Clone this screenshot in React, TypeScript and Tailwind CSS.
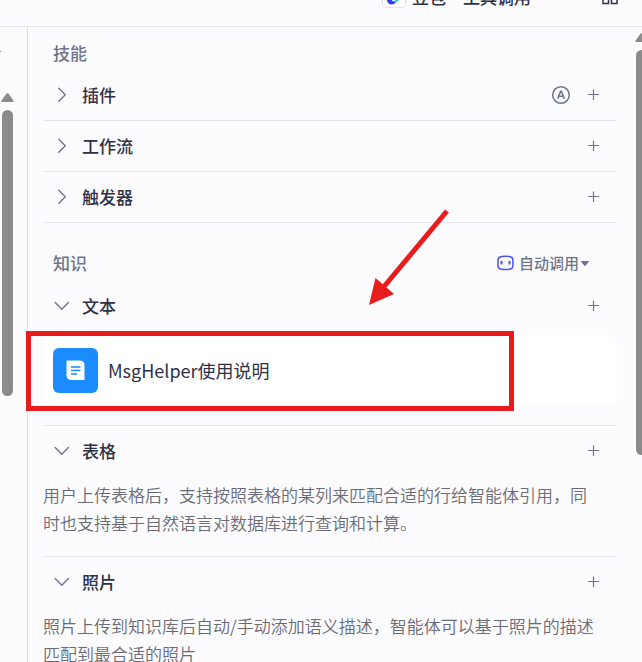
import { useState } from "react";
import type { ReactNode } from "react";

interface SectionProps {
  title: string;
  defaultOpen?: boolean;
  extra?: ReactNode;
  last?: boolean;
  children?: ReactNode;
}

function Chevron({ open }: { open: boolean }) {
  return (
    <svg className="h-4 w-4" viewBox="0 0 16 16" fill="none" stroke="#6f7489" strokeWidth="1.4" strokeLinecap="round" strokeLinejoin="round">
      {open ? <path d="M1.200 4.500 7.800 11.200 14.400 4.500" /> : <path d="M4.800 1.200 11.300 7.700 4.800 14.200" />}
    </svg>
  );
}

function Section({ title, defaultOpen = false, extra, last, children }: SectionProps) {
  const [open, setOpen] = useState(defaultOpen);

  return (
    <section className={last ? "" : "border-b border-[#e4e4f0]"}>
      <div className="flex h-[50px] items-center justify-between pr-[18px] pl-[11px]">
        <button
          type="button"
          aria-expanded={open}
          onClick={() => setOpen(!open)}
          className="flex items-center gap-3 text-[17px] leading-7 font-medium text-[#2e3145]"
        >
          <Chevron open={open} />
          {title}
        </button>
        <div className="flex items-center gap-4">
          {extra}
          <button type="button" aria-label={`添加${title}`}>
            <svg className="h-3 w-3" viewBox="0 0 12 12" fill="none" stroke="#6f7489" strokeWidth="1.2">
              <path d="M6.500 .5v10.500M1 5.500h11" />
            </svg>
          </button>
        </div>
      </div>
      {open && children}
    </section>
  );
}

function ArrowUp() {
  return (
    <svg className="h-[9px] w-[13px]" viewBox="0 0 13 9" fill="#8b8b8b">
      <path d="M5.600.6Q6.500-.3 7.400.6L12.500 7.400Q13 9 11.800 9H1.200Q0 9 .5 7.400Z" />
    </svg>
  );
}

function Header() {
  return (
    <header className="flex h-[27px] items-end justify-end overflow-hidden border-b border-[#e4e4f0] pr-6">
      <div className="flex h-[58px] shrink-0 items-center">
        <button type="button" className="flex items-center text-[17px] leading-7 font-medium text-[#2e3145]">
          <span className="mr-1.5 flex h-[22px] w-6 items-center justify-center rounded border border-[#e2e2ee] bg-white">
            <svg className="h-4 w-4" viewBox="0 0 16 16" fill="none">
              <path d="M3 3C-.5 9 .5 15 5 15.500C8 15.500 10 14 10.500 12C7.500 13 5.500 12 5.500 9.500C5.500 7 7 5 9 3Z" fill="#2f3df5" />
              <path d="M9.500 13.500C13.500 12 15.500 8.500 14.500 3L11.500 3C12 7 10.500 10.500 7.500 12.200Z" fill="#2fd6b8" />
              <path d="M6.500 3h4.500C11 7 9.500 10.500 6.500 11.500C4.800 9 5 6 6.500 3Z" fill="#fff" />
            </svg>
          </span>
          豆包・工具调用
          <svg className="ml-3 h-2 w-2" viewBox="0 0 8 8" fill="#6f7489">
            <path d="M0 0h8L4 5Z" />
          </svg>
        </button>
        <button type="button" aria-label="布局" className="ml-[51px]">
          <svg className="h-4 w-4" viewBox="0 0 16 16" fill="none" stroke="#2e3145" strokeWidth="1.5">
            <rect x="1" y="1" width="5.500" height="5.500" />
            <rect x="9.500" y="1" width="5.500" height="5.500" />
            <rect x="1" y="9" width="5.500" height="5.500" />
            <rect x="9.500" y="9" width="5.500" height="5.500" />
          </svg>
        </button>
      </div>
    </header>
  );
}

function CallModeSelect() {
  return (
    <label className="flex items-center">
      <svg className="mr-[5px] h-4 w-[17px]" viewBox="0 0 17 16" fill="none" stroke="#4d53e8" strokeWidth="1.5">
        <path d="M4.500 1.500Q8.500 .8 12.500 1.500Q15.800 2 15.900 5V11Q15.800 13.800 12.500 14.200Q8.500 14.800 4.500 14.200Q1.200 13.800 1 11V5Q1.200 2 4.500 1.500Z" />
        <path d="M4.500 6v3.500M12.500 6v3.500" strokeWidth="2" />
      </svg>
      <select
        aria-label="调用方式"
        className="appearance-none bg-transparent text-[15px] leading-6 font-medium text-[#6f7489]"
      >
        <option>自动调用</option>
        <option>按需调用</option>
      </select>
      <svg className="ml-px h-[5px] w-2" viewBox="0 0 8 5" fill="#6f7489">
        <path d="M.6 0H7.400Q8.200.3 7.700 1L4.700 4.600Q4 5.200 3.300 4.600L.3 1Q-.2.3.6 0Z" />
      </svg>
    </label>
  );
}

export default function App() {
  return (
    <div className="flex h-screen flex-col overflow-hidden bg-[#fcfcff] font-['Noto_Sans_CJK_SC','Noto_Sans',sans-serif]">
      <Header />
      <div className="relative flex min-h-0 flex-1">
        <aside className="flex w-7 shrink-0 flex-col border-r border-[#dcdce4] bg-[#fcfcfd] pt-6">
          <span className="h-px w-px bg-[#8a6cff]" />
          <div className="mt-[41px] ml-px flex flex-col gap-2">
            <ArrowUp />
            <div className="ml-px h-[286px] w-[11px] rounded-full bg-[#8b8b8b]" />
          </div>
        </aside>

        <main className="min-w-0 flex-1 pl-[15px]">
          <h2 className="flex h-[43px] items-center pt-2 pl-2.5 text-[17px] leading-7 font-medium text-[#6f7489]">技能</h2>
          <Section
            title="插件"
            extra={
              <button type="button" aria-label="自动添加插件">
                <svg className="h-5 w-5" viewBox="0 0 20 20" fill="none" stroke="#6f7489" strokeWidth="1.5">
                  <circle cx="10" cy="10" r="8.300" />
                  <path d="M6.800 13.800 9.600 6.200h.8l2.800 7.600M7.800 11.300h4.400" strokeWidth="1.600" />
                </svg>
              </button>
            }
          />
          <Section title="工作流" />
          <Section title="触发器" />

          <div className="flex h-[58px] items-center justify-between pt-[22px] pr-7 pl-2.5">
            <h2 className="text-[17px] leading-7 font-medium text-[#6f7489]">知识</h2>
            <CallModeSelect />
          </div>
          <Section title="文本" defaultOpen>
            <div className="relative mt-1 mb-5">
              <div className="flex h-[70px] items-center gap-2.5 rounded-xl bg-white px-2.5">
                <span className="flex h-[45px] w-[45px] items-center justify-center rounded-md bg-[#1a8cff]">
                  <svg className="h-5 w-5" viewBox="0 0 20 20">
                    <path d="M.5 .5H14Q18.500 1 18.500 5V20H5Q.5 19.500 .5 15.500Z" fill="#fff" />
                    <path d="M5 7H14.500M5 10.500H14.500M5 14H11" stroke="#1a8cff" strokeWidth="1.300" />
                  </svg>
                </span>
                <span className="text-[18px] leading-7 text-[#2e3145]">MsgHelper使用说明</span>
              </div>
              <div className="pointer-events-none absolute -top-1 right-[103px] -bottom-1.5 -left-[17px] border-5 border-[#e81c1c]" />
            </div>
          </Section>
          <Section title="表格" defaultOpen>
            <p className="pt-[5px] pb-[19px] text-[17px] leading-7 font-[350] text-[#6b6b75]">
              用户上传表格后，支持按照表格的某列来匹配合适的行给智能体引用，同
              <br />
              时也支持基于自然语言对数据库进行查询和计算。
            </p>
          </Section>
          <Section title="照片" defaultOpen last>
            <p className="pt-[5px] text-[17px] leading-7 font-[350] text-[#6b6b75]">
              照片上传到知识库后自动/手动添加语义描述，智能体可以基于照片的描述
              <br />
              匹配到最合适的照片
            </p>
          </Section>
        </main>

        <div className="flex w-[25px] shrink-0 flex-col gap-2 overflow-hidden pt-1.5 pl-[18px]">
          <ArrowUp />
          <div className="ml-px h-[405px] w-[11px] shrink-0 rounded-full bg-[#8b8b8b]" />
        </div>

        {/* pointer towards the document card */}
        <svg className="pointer-events-none absolute top-[181px] right-[192px] h-[98px] w-[82px]" viewBox="0 0 82 98">
          <path d="M79 3 14 81" stroke="#e81c1c" strokeWidth="5" />
          <path d="M1 97 7.500 70 26 86Z" fill="#e81c1c" />
        </svg>
      </div>
    </div>
  );
}
